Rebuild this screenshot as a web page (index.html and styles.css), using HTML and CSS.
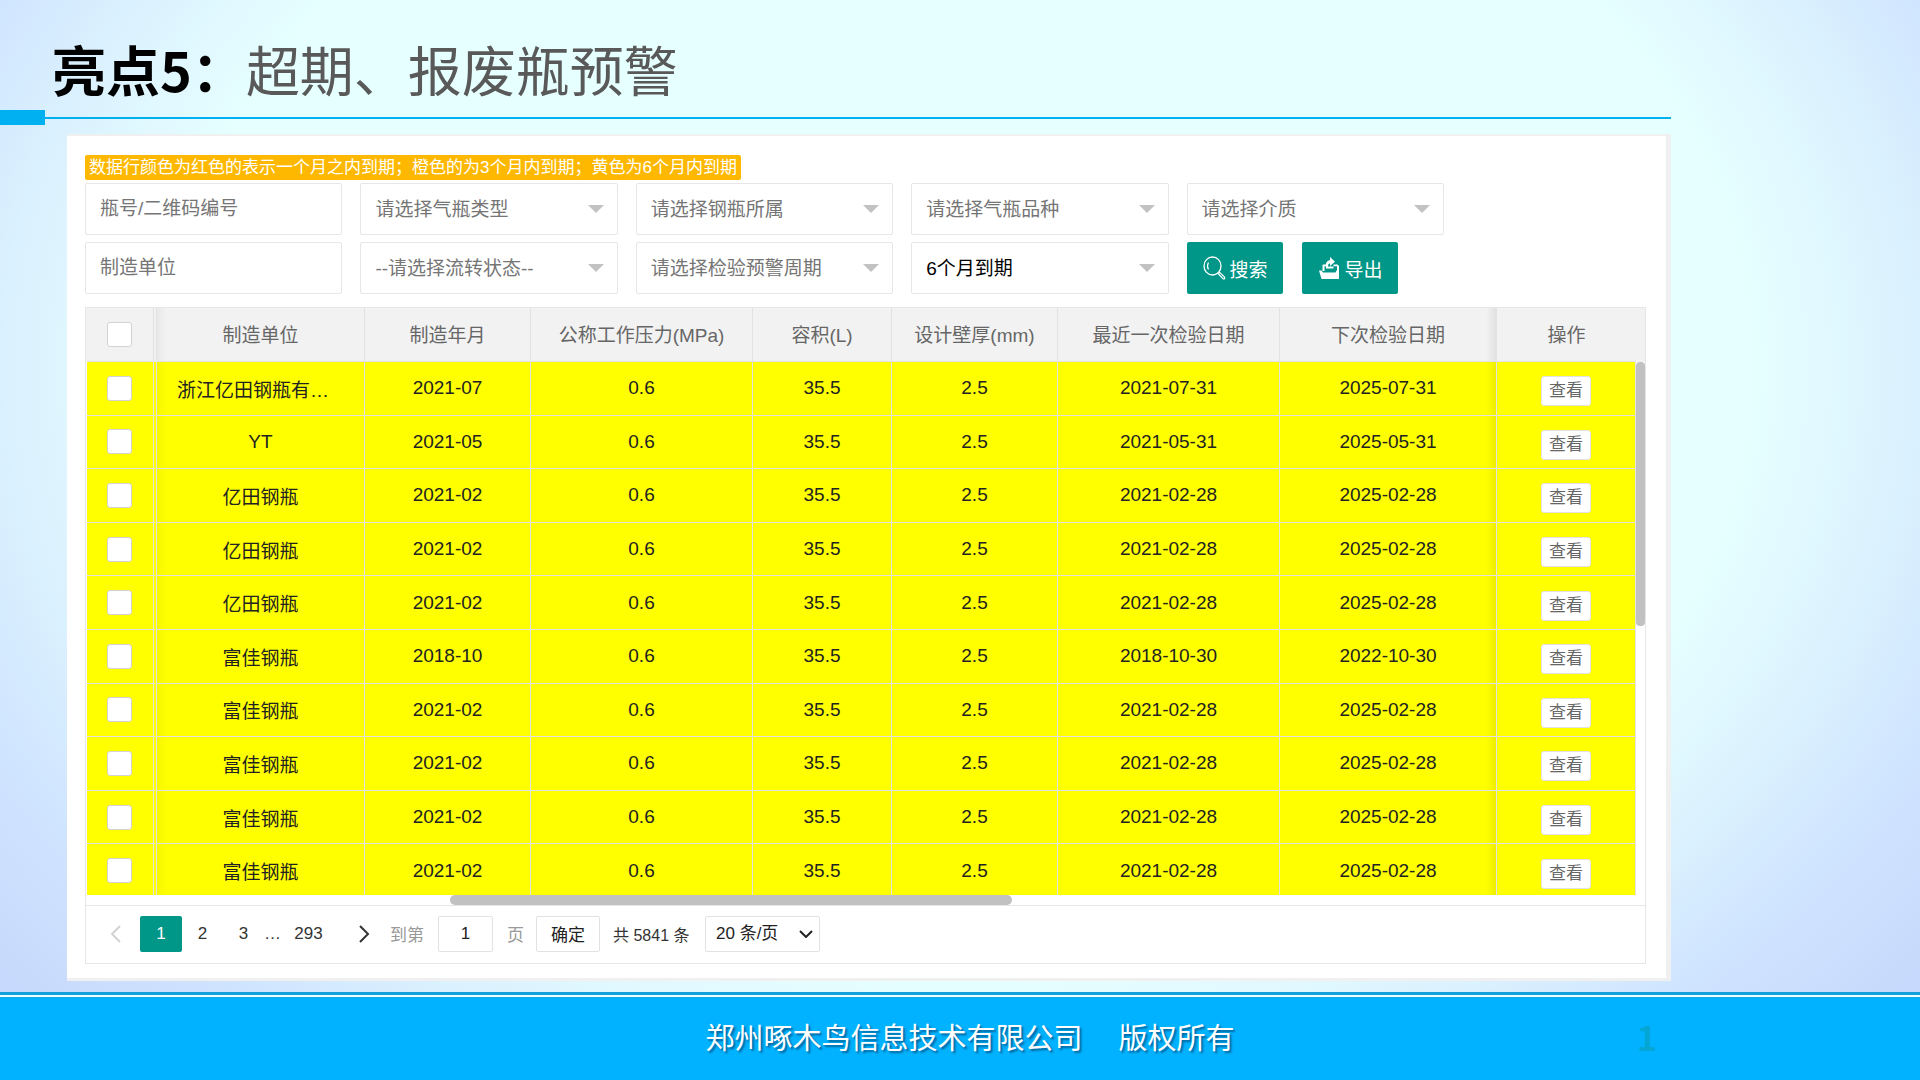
FILE: index.html
```html
<!DOCTYPE html>
<html lang="zh-CN">
<head>
<meta charset="utf-8">
<meta name="viewport" content="width=device-width, initial-scale=1">
<title>超期、报废瓶预警</title>
<link rel="stylesheet" href="styles.css">
</head>
<body>
<header class="title-bar">
  <h1 class="title"><strong>亮点5：</strong>超期、报废瓶预警</h1>
  <div class="rule"><span class="rule-block"></span><span class="rule-line"></span></div>
</header>
<main class="panel">
  <p class="notice">数据行颜色为红色的表示一个月之内到期；橙色的为3个月内到期；黄色为6个月内到期</p>
  <form class="filters">
    <input class="field" type="text" placeholder="瓶号/二维码编号" aria-label="瓶号/二维码编号">
    <select class="field field-select" aria-label="气瓶类型"><option>请选择气瓶类型</option></select>
    <select class="field field-select" aria-label="钢瓶所属"><option>请选择钢瓶所属</option></select>
    <select class="field field-select" aria-label="气瓶品种"><option>请选择气瓶品种</option></select>
    <select class="field field-select" aria-label="介质"><option>请选择介质</option></select>
    <input class="field" type="text" placeholder="制造单位" aria-label="制造单位">
    <select class="field field-select" aria-label="流转状态"><option>--请选择流转状态--</option></select>
    <select class="field field-select" aria-label="检验预警周期"><option>请选择检验预警周期</option></select>
    <select class="field field-select chosen" aria-label="到期时间"><option>6个月到期</option></select>
    <div class="actions">
      <button class="btn" type="button">
        <svg class="icon" viewBox="0 0 24 26" aria-hidden="true"><ellipse cx="10.500" cy="11" rx="8.500" ry="9" fill="none" stroke="#fff" stroke-width="1.300"/><path d="M6.500 7.500q-2 3.500 0 7" fill="none" stroke="#fff" stroke-width="1.200"/><path d="M16 18.500l1.500-1.300 5 5q.8 2-1.200 1.800z" fill="none" stroke="#fff" stroke-width="1.200"/></svg>
        搜索
      </button>
      <button class="btn" type="button">
        <svg class="icon" viewBox="0 0 24 26" aria-hidden="true"><path fill="#fff" d="M2 15.500h2.500l1.500 2h12.500l1-2H22V24H4.500z"/><path fill="#fff" d="M6 9.500h3v1.800H7.500v4.700h-2V10zM16.500 9.500h4l1.500 1.500v5h-2v-4.700h-3.500z"/><path fill="#fff" d="M9 13.500q-1.500-7.500 4-8.500V2l5 4.700-5 4.300V8.300q-2.300.5-2 3.200h5.500v2z"/></svg>
        导出
      </button>
    </div>
  </form>
  <section class="grid">
    <div class="grid-view">
      <div class="grid-body">
        <table class="data">
          <colgroup><col class="c-check"><col class="c-maker"><col class="c-month"><col class="c-press"><col class="c-vol"><col class="c-month"><col class="c-press"><col class="c-next"><col class="c-op"></colgroup>
          <thead>
            <tr><th class="pin"><input class="tick" type="checkbox" aria-label="全选"></th><th class="after-pin">制造单位</th><th>制造年月</th><th>公称工作压力(MPa)</th><th>容积(L)</th><th>设计壁厚(mm)</th><th>最近一次检验日期</th><th class="before-op">下次检验日期</th><th class="op">操作</th></tr>
          </thead>
          <tbody id="rows"></tbody>
        </table>
      </div>
      <div class="v-track"><span class="v-thumb"></span></div>
    </div>
    <div class="h-track"><span class="h-thumb"></span></div>
    <nav class="pager" aria-label="分页">
      <a class="page arrow off" href="#" aria-label="上一页"><svg viewBox="0 0 12 18" aria-hidden="true"><path d="M10 1L2 9l8 8"/></svg></a>
      <a class="page current" href="#">1</a>
      <a class="page" href="#">2</a>
      <a class="page" href="#">3</a>
      <span class="dots">…</span>
      <a class="page last" href="#">293</a>
      <a class="page arrow next" href="#" aria-label="下一页"><svg viewBox="0 0 12 18" aria-hidden="true"><path d="M2 1l8 8-8 8"/></svg></a>
      <label class="jump">到第<input class="jump-input" type="text" value="1">页</label>
      <button class="jump-btn" type="button">确定</button>
      <span class="total">共 5841 条</span>
      <select class="size" aria-label="每页条数"><option>20 条/页</option></select>
    </nav>
  </section>
</main>
<footer class="footer">
  <p class="copyright"><span>郑州啄木鸟信息技术有限公司</span><span>版权所有</span></p>
  <span class="slide-no">1</span>
</footer>
<script src="rows.js"></script>
</body>
</html>
```
FILE: rows.js
```js
const rows = [
  ["浙江亿田钢瓶有…", "2021-07", "2021-07-31", "2025-07-31"],
  ["YT", "2021-05", "2021-05-31", "2025-05-31"],
  ["亿田钢瓶", "2021-02", "2021-02-28", "2025-02-28"],
  ["亿田钢瓶", "2021-02", "2021-02-28", "2025-02-28"],
  ["亿田钢瓶", "2021-02", "2021-02-28", "2025-02-28"],
  ["富佳钢瓶", "2018-10", "2018-10-30", "2022-10-30"],
  ["富佳钢瓶", "2021-02", "2021-02-28", "2025-02-28"],
  ["富佳钢瓶", "2021-02", "2021-02-28", "2025-02-28"],
  ["富佳钢瓶", "2021-02", "2021-02-28", "2025-02-28"],
  ["富佳钢瓶", "2021-02", "2021-02-28", "2025-02-28"]
];
document.getElementById("rows").innerHTML = rows.map(([maker, month, last, next]) => `
<tr><td class="pin"><input class="tick" type="checkbox" aria-label="选择"></td>
<td class="after-pin${maker.endsWith("…") ? " clipped" : ""}">${maker}</td><td>${month}</td><td>0.6</td><td>35.5</td><td>2.5</td>
<td>${last}</td><td class="before-op">${next}</td>
<td class="op"><button class="view" type="button">查看</button></td></tr>`).join("");
```
FILE: styles.css
```css
* { box-sizing: border-box; }

body {
  margin: 0;
  min-height: 100vh;
  display: flex;
  flex-direction: column;
  font-family: "Liberation Sans", "Noto Sans CJK SC", sans-serif;
  font-size: 19px;
  color: #222;
  background: radial-gradient(ellipse 41% 56% at 50% 34%, #e6ffff 100%, #dbf2fe 120%, #d0e5ff 136%, #c7d9fc 158%);
}

input, select, button { font: inherit; }

/* Title */
.title {
  margin: 0;
  padding: 29px 0 0 52px;
  height: 110px;
  font-family: "Noto Sans CJK SC", sans-serif;
  font-size: 54px;
  line-height: 80px;
  font-weight: 400;
  color: #595959;
}
.title strong { font-weight: 700; color: #000; }
.rule { display: flex; align-items: center; margin-right: 249px; }
.rule-block { width: 45px; height: 15px; background: #00b0f0; }
.rule-line { flex: 1; height: 2px; background: #00b0f0; }

/* Panel */
.panel {
  margin: 9px 249px 11px 67px;
  padding: 19px 20px 14px 18px;
  background: #fff;
  border: solid #f0f0f0;
  border-width: 2px 5px 3px 0;
}
.notice {
  width: fit-content;
  margin: 0 0 3px;
  padding: 0 4px;
  border-radius: 2px;
  background: #ffb800;
  color: #fff;
  font-size: 17px;
  line-height: 25px;
}
.filters {
  display: grid;
  grid-template-columns: repeat(5, 1fr);
  gap: 7px 18px;
  margin: 0 202px 13px 0;
}
.field {
  width: 100%;
  height: 52px;
  padding: 0 14px;
  border: 1px solid #e6e6e6;
  border-radius: 2px;
  background: #fff;
  color: #757575;
}
.field::placeholder { color: #757575; opacity: 1; }
.field-select {
  appearance: none;
  background: #fff url("data:image/svg+xml,%3Csvg xmlns='http://www.w3.org/2000/svg' viewBox='0 0 16 8'%3E%3Cpath d='M0 0h16l-8 8z' fill='%23c2c2c2'/%3E%3C/svg%3E") no-repeat right 13px center / 16px 8px;
}
.chosen { color: #000; }
.actions { display: flex; gap: 19px; }
.btn {
  display: flex;
  align-items: center;
  justify-content: center;
  gap: 4px;
  width: 96px;
  height: 52px;
  padding: 0;
  border: 0;
  border-radius: 2px;
  background: #009688;
  color: #fff;
  white-space: nowrap;
}
.icon { width: 24px; height: 26px; }

/* Data grid */
.grid { border: 1px solid #e6e6e6; }
.grid-view { display: flex; height: 587px; background: linear-gradient(#f2f2f2 54px, #fff 54px); overflow: hidden; }
.grid-body { flex: 1; min-width: 0; padding: 0 0 0 1px; }
.data {
  width: 100%;
  height: 590px;
  table-layout: fixed;
  border-collapse: separate;
  border-spacing: 0;
  text-align: center;
}
.c-check { width: 70px; }
.c-maker { width: 208px; }
.c-month { width: 166px; }
.c-press { width: 222px; }
.c-vol { width: 139px; }
.c-next { width: 217px; }
.c-op { width: 139px; }
.data th, .data td {
  padding: 0 10px;
  border: solid #e2e2e2;
  border-width: 0 1px 1px 0;
  white-space: nowrap;
}
.data th { height: 54px; padding: 0 0 2px; background: #f2f2f2; color: #666; font-weight: 400; }
.data td { background-color: #ff0; }
.data .pin { padding: 0 1px 0 0; border-right: 4px double #e2e2e2; }
.data .after-pin { background-image: linear-gradient(90deg, rgba(0, 0, 0, .04), transparent 10px); }
.data .before-op { background-image: linear-gradient(270deg, rgba(0, 0, 0, .07), transparent 10px); }
.data .clipped { padding: 0 20px; text-align: left; }
.data td.op { padding: 6px 0 0; }
.data th.op { border-right: 0; }
.tick {
  appearance: none;
  display: block;
  width: 25px;
  height: 25px;
  margin: 0 auto;
  border: 1px solid #d2d2d2;
  border-radius: 3px;
  background: #fff;
}
.view {
  display: block;
  width: 50px;
  height: 30px;
  margin: 0 auto;
  padding: 0;
  border: 1px solid #e2e2e2;
  border-radius: 3px;
  background: #fff;
  color: #666;
  font-size: 17px;
  line-height: 28px;
}
.v-track { width: 9px; padding-top: 54px; }
.v-thumb { display: block; height: 264px; border-radius: 4px; background: #c1c1c1; }
.h-track { height: 10px; padding-left: 364px; }
.h-thumb { display: block; width: 47%; height: 10px; border-radius: 5px; background: #c1c1c1; }

/* Pager */
.pager {
  display: flex;
  align-items: center;
  height: 58px;
  padding: 0 0 2px 6px;
  border-top: 1px solid #e6e6e6;
  font-size: 17px;
  color: #333;
}
.page {
  width: 41px;
  line-height: 36px;
  border-radius: 2px;
  color: #333;
  text-align: center;
  text-decoration: none;
}
.current { width: 42px; background: #009688; color: #fff; }
.arrow { display: flex; justify-content: center; }
.arrow svg { width: 12px; height: 18px; fill: none; stroke: #333; stroke-width: 2; }
.off { width: 48px; }
.off svg { stroke: #d2d2d2; }
.dots { width: 15px; text-align: center; }
.last { width: 59px; }
.next { width: 52px; }
.jump { display: flex; align-items: center; gap: 14px; font-size: 17px; color: #999; }
.jump-input, .jump-btn, .size {
  height: 36px;
  border: 1px solid #e2e2e2;
  border-radius: 2px;
  background: #fff;
  color: #222;
}
.jump-input { width: 55px; padding: 0; text-align: center; }
.jump-btn { width: 64px; margin: 0 13px 0 12px; padding: 0; }
.total { width: 92px; font-size: 16px; }
.size {
  width: 115px;
  padding: 0 10px;
  appearance: none;
  background: #fff url("data:image/svg+xml,%3Csvg xmlns='http://www.w3.org/2000/svg' viewBox='0 0 14 8'%3E%3Cpath d='M1 1l6 6 6-6' fill='none' stroke='%23222' stroke-width='2'/%3E%3C/svg%3E") no-repeat right 6px center / 14px 8px;
}

/* Footer */
.footer {
  position: relative;
  flex: 1;
  min-height: 80px;
  display: flex;
  align-items: center;
  justify-content: center;
  padding-left: 20px;
  background: linear-gradient(#12a0dc 3px, #e6ffff 3px, #e6ffff 5px, #1aa6e0 5px, #00b2ff 7px);
}
.copyright {
  display: flex;
  gap: 36px;
  margin: 0;
  color: #fff;
  font-size: 29px;
  text-shadow: 2px 2px 2px rgba(0, 50, 90, .6);
}
.slide-no {
  position: absolute;
  right: 263px;
  font-family: "Noto Sans CJK SC", sans-serif;
  font-size: 34px;
  font-weight: 700;
  color: #05a6d4;
}
```
